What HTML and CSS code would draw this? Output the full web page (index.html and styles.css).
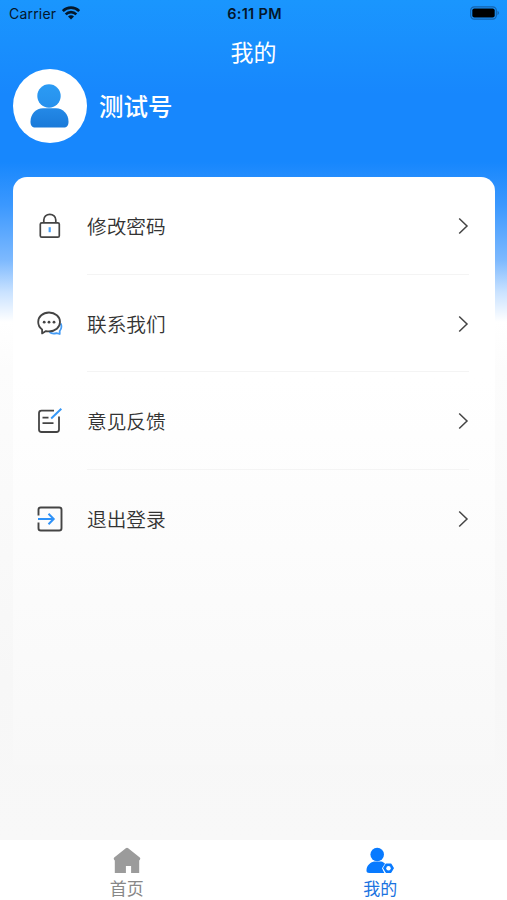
FILE: index.html
```html
<!DOCTYPE html>
<html lang="zh-CN">
<head>
    <meta charset="UTF-8">
    <title>我的</title>
    <link rel="stylesheet" href="styles.css">
</head>
<body>
    <div class="page">
        <div class="status">
            <div class="carrier">
                <span>Carrier</span>
                <svg width="18" height="14" viewBox="0 0 18 14" fill="none" stroke="#04172b" stroke-width="2.6">
                    <path d="M.8 5a11.600 11.600 0 0 1 16.400 0"/>
                    <path d="M3.700 8.300a7.500 7.500 0 0 1 10.600 0"/>
                    <path d="M9 13.500L6 10.500a4.200 4.200 0 0 1 6 0z" fill="#04172b" stroke="none"/>
                </svg>
            </div>
            <div class="time">6:11 PM</div>
            <svg class="battery" width="30" height="14" viewBox="0 0 30 14">
                <rect x=".7" y=".8" width="25.6" height="12.4" rx="3.6" fill="none" stroke="#1463ad" stroke-width="1.2"/>
                <rect x="2.3" y="2.4" width="22.4" height="9.2" rx="2" fill="#000"/>
                <path d="M27.500 4.800q3 2.200 0 4.400z" fill="#1463ad"/>
            </svg>
        </div>
        <h1 class="title">我的</h1>

        <div class="user">
            <div class="avatar">
                <svg width="74" height="74" viewBox="0 0 74 74">
                    <defs>
                        <linearGradient id="head" x1="0" y1="0" x2="0" y2="1">
                            <stop offset="0" stop-color="#2b9bf4"/>
                            <stop offset="1" stop-color="#2690ed"/>
                        </linearGradient>
                        <linearGradient id="body" x1="0" y1="0" x2="0" y2="1">
                            <stop offset="0" stop-color="#2489e7"/>
                            <stop offset="1" stop-color="#1a7ad9"/>
                        </linearGradient>
                    </defs>
                    <circle cx="36" cy="27" r="11.700" fill="url(#head)"/>
                    <path d="M30 39.300h13c7 0 12.500 6 12.500 13.200c0 4-1.500 6-5 6h-28c-3.500 0-5-2-5-6C17.500 45 23 39.300 30 39.300z" fill="url(#body)"/>
                </svg>
            </div>
            <div class="name">测试号</div>
        </div>

        <div class="card">
            <div class="item">
                <svg class="icon" width="28" height="28" viewBox="0 0 28 28" fill="none" stroke="#444" stroke-width="1.7">
                    <rect x="4.300" y="10.800" width="19" height="14.400" rx="1.500"/>
                    <path d="M7.800 10.800V8a6 5.700 0 0 1 12 0v2.800"/>
                    <path d="M13.700 15.200v5" stroke="#4aa0f5" stroke-width="2.2"/>
                </svg>
                <div class="text">修改密码</div>
                <svg class="arrow" width="12" height="18" viewBox="0 0 12 18"><path d="M1.200 1.500L9 9l-7.800 7.500"/></svg>
            </div>
            <div class="item">
                <svg class="icon" width="28" height="28" viewBox="0 0 28 28" fill="none" stroke="#444" stroke-width="1.8" stroke-linejoin="round">
                    <path d="M24.700 13.500c1.300 2.700 1 5.100-1 7.500v3l-3.200-.9c-2.600.8-5.500.3-7-1.100" stroke="#459cf5"/>
                    <path d="M13 2.500C6.800 2.500 2.200 6.600 2.200 12c0 3.200 1.400 5.700 3.900 7.400v4l3.800-2.300c1 .2 2 .3 3.100.3c6.200 0 11-4 11-9.400S19.200 2.500 13 2.500z" fill="#fff"/>
                    <g fill="#444" stroke="none"><circle cx="8.200" cy="12.200" r="1.400"/><circle cx="13" cy="12.200" r="1.400"/><circle cx="18" cy="12.200" r="1.400"/></g>
                </svg>
                <div class="text">联系我们</div>
                <svg class="arrow" width="12" height="18" viewBox="0 0 12 18"><path d="M1.200 1.500L9 9l-7.800 7.500"/></svg>
            </div>
            <div class="item">
                <svg class="icon" width="28" height="28" viewBox="0 0 28 28" fill="none" stroke="#444" stroke-width="1.8">
                    <path d="M18 3.700H5.500q-2.500 0-2.500 2.500v16.300q0 2.500 2.500 2.500h15q2.500 0 2.500-2.500V9.500"/>
                    <path d="M6.500 10.700h6M6.500 16.200h11"/>
                    <path d="M15.200 11.500L25.300 1.800" stroke="#3597f7" stroke-width="2"/>
                </svg>
                <div class="text">意见反馈</div>
                <svg class="arrow" width="12" height="18" viewBox="0 0 12 18"><path d="M1.200 1.500L9 9l-7.800 7.500"/></svg>
            </div>
            <div class="item">
                <svg class="icon" width="28" height="28" viewBox="0 0 28 28" fill="none" stroke="#444" stroke-width="1.9">
                    <path d="M2.500 10.500V4.800q0-2.300 2.300-2.300h18.400q2.300 0 2.300 2.300v18.400q0 2.300-2.300 2.300H4.800q-2.300 0-2.300-2.300v-5.700"/>
                    <path d="M2 14h15.500M12.500 8.800l5.200 5.200-5.200 5.200" stroke="#2f92f8" stroke-width="2"/>
                </svg>
                <div class="text">退出登录</div>
                <svg class="arrow" width="12" height="18" viewBox="0 0 12 18"><path d="M1.200 1.500L9 9l-7.800 7.500"/></svg>
            </div>
        </div>

        <div class="tabbar">
            <div class="tab">
                <svg width="28" height="28" viewBox="0 0 28 28">
                    <path d="M12.800 1.200q1.200-.8 2.400 0l11.600 9.300q1.200 1.300-.2 2.700h-.4v12.900h-8.100v-7.200h-5.200v7.200H1.800V13.200h-.4q-1.400-1.400-.2-2.700z" fill="#9b9b9b"/>
                </svg>
                <span>首页</span>
            </div>
            <div class="tab active">
                <svg width="28" height="28" viewBox="0 0 28 28">
                    <circle cx="11.200" cy="7.500" r="6.800" fill="#087aff"/>
                    <path d="M8 14.600h7c2 .4 3.200 1.200 4 2.200L16 21.200l2.300 4.800H3.500C1 26 .3 25 .5 23c.4-4.500 3.500-7.400 7.500-8.400z" fill="#087aff"/>
                    <path d="M20.200 17.200h4.600l2.400 4-2.400 4h-4.600l-2.400-4z" fill="#087aff" stroke="#087aff" stroke-width="1.4" stroke-linejoin="round"/>
                    <circle cx="22.500" cy="21.200" r="2.200" fill="#fff"/>
                </svg>
                <span>我的</span>
            </div>
        </div>
    </div>
</body>
</html>
```
FILE: styles.css
```css
*{
    box-sizing: border-box;
}
body{
    margin: 0;
    font-family: "Noto Sans CJK SC", sans-serif;
}
.page{
    display: flex;
    flex-direction: column;
    height: 900px;
    background: linear-gradient(#1a96fe 0, #198ffd 45px, #1787fd 95px, #1787fd 162px, #3b98fe 205px, #7db9fe 260px, #c9e2ff 292px, #fff 322px, #fcfcfc 370px, #f7f7f7 680px, #f8f8f8 840px);
}
.status{
    display: grid;
    grid-template-columns: 1fr auto 1fr;
    align-items: center;
    height: 28px;
    padding: 0 7px 2px 9px;
    font-family: Inter, sans-serif;
    font-size: 14px;
    color: #04172b;
}
.carrier{
    display: flex;
    align-items: center;
    gap: 6px;
    letter-spacing: .2px;
}
.time{
    font-weight: 600;
    font-size: 14.500px;
    letter-spacing: .3px;
}
.battery{
    justify-self: end;
}
.title{
    margin: 0;
    height: 41px;
    padding-top: 3px;
    line-height: 40px;
    font-size: 23px;
    font-weight: 400;
    text-align: center;
    color: #fff;
}
.user{
    display: flex;
    align-items: center;
    gap: 12px;
    height: 74px;
    margin: 0 13px 34px;
}
.avatar{
    width: 74px;
    height: 74px;
    border-radius: 50%;
    background: #fff;
}
.name{
    padding-bottom: 2px;
    font-size: 24.500px;
    font-weight: 500;
    color: #fff;
}
.card{
    height: 588px;
    margin: 0 12px 0 13px;
    border-radius: 14px 14px 0 0;
    background: linear-gradient(#fff 0, #fff 200px, #fcfcfc 370px, #f8f8f8 588px);
}
.item{
    display: grid;
    grid-template-columns: 51px 1fr 12px;
    align-items: center;
    height: 97.700px;
    padding: 0 25px 0 23px;
    background: linear-gradient(#f4f4f4, #f4f4f4) 74px 100% / 382px 1px no-repeat;
}
.item:last-child{
    background: none;
}
.text{
    padding-bottom: 1px;
    font-size: 19.700px;
    font-weight: 350;
    color: #333;
}
.arrow{
    fill: none;
    stroke: #444;
    stroke-width: 1.5;
}
.tabbar{
    display: flex;
    height: 60px;
    margin-top: auto;
    background: #fff;
}
.tab{
    display: flex;
    flex: 1;
    flex-direction: column;
    align-items: center;
    padding-top: 7px;
    font-size: 17px;
    line-height: 24px;
    color: #888;
}
.tab svg{
    flex-shrink: 0;
}
.tab span{
    padding-top: 1px;
}
.active{
    color: #1a73e0;
}
```
